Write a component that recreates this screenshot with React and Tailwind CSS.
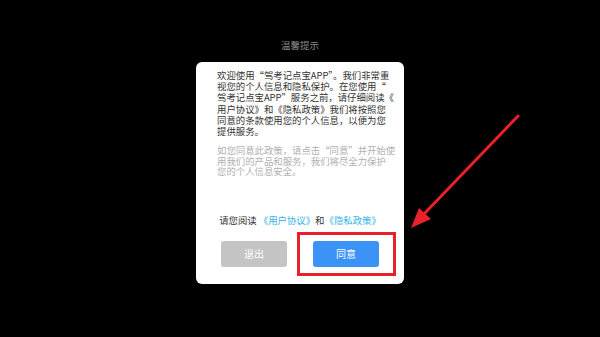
import React from "react";

const mainLines = [
  "欢迎使用“驾考记点宝APP”。我们非常重",
  "视您的个人信息和隐私保护。在您使用“",
  "驾考记点宝APP”服务之前，请仔细阅读《",
  "用户协议》和《隐私政策》我们将按照您",
  "同意的条款使用您的个人信息，以便为您",
  "提供服务。",
];

const noteLines = [
  "如您同意此政策，请点击“同意”并开始使",
  "用我们的产品和服务，我们将尽全力保护",
  "您的个人信息安全。",
];

export default function App() {
  return (
    <div
      className="relative w-[600px] h-[337px] bg-black overflow-hidden"
      style={{ fontFamily: '"Noto Sans CJK SC", "Noto Sans", sans-serif' }}
    >
      <div className="flex flex-col items-center pt-[39px]">
        <div className="text-[9.5px] leading-[12px] text-[#8a8a8a]">温馨提示</div>

        <div className="mt-[11px] w-[208px] h-[222px] bg-white rounded-[6px] flex flex-col">
          <div className="pt-[8px] pl-[21px] text-[9.4px] leading-[11.2px] text-[#333] whitespace-nowrap">
            {mainLines.map((l, i) => (
              <div key={i}>{l}</div>
            ))}
          </div>

          <div className="mt-[8px] pl-[21px] text-[9.4px] leading-[10.6px] text-[#b0b0b0] whitespace-nowrap">
            {noteLines.map((l, i) => (
              <div key={i}>{l}</div>
            ))}
          </div>

          <div className="mt-[37px] text-center text-[9.4px] leading-[12px] text-[#333] whitespace-nowrap">
            请您阅读 <span className="text-[#33b3e6]">《用户协议》</span>和<span className="text-[#33b3e6]">《隐私政策》</span>
          </div>

          <div className="mt-[6px] flex items-center gap-[10px] pl-[25px]">
            <button className="w-[66px] h-[26px] rounded-[3px] bg-[#c4c4c4] text-white text-[10px]">
              退出
            </button>
            <div className="border-[3px] border-[#e8202a] pl-[13px] pr-[14px] pt-[4px] pb-[6px]">
              <button className="w-[66px] h-[26px] rounded-[3px] bg-[#3b93f7] text-white text-[10px]">
                同意
              </button>
            </div>
          </div>
        </div>
      </div>

      <svg className="absolute left-0 top-0" width="600" height="337" viewBox="0 0 600 337">
        <line x1="518" y1="116" x2="424" y2="214" stroke="#e8212b" strokeWidth="3" strokeLinecap="round" />
        <polygon points="411,228 419,208 431,219" fill="#e8212b" />
      </svg>
    </div>
  );
}
